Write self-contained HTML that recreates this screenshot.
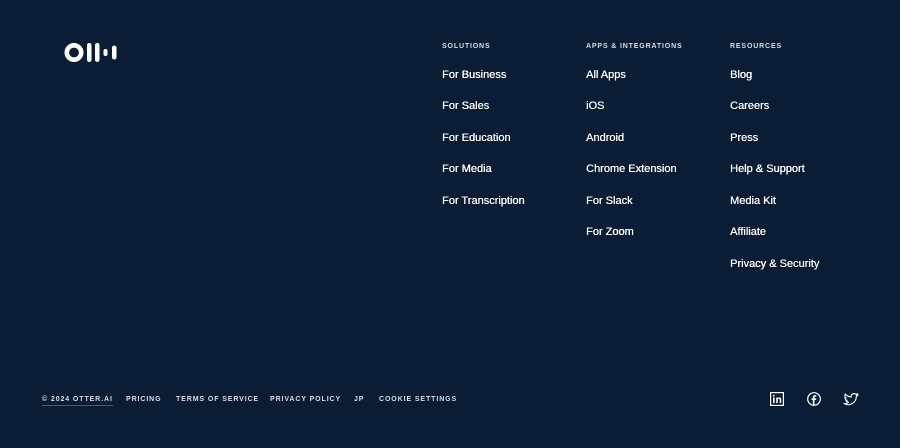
<!DOCTYPE html>
<html><head><meta charset="utf-8"><style>
*{margin:0;padding:0;box-sizing:border-box}
body{width:900px;height:448px;background:#0b1d35;font-family:"Liberation Sans",sans-serif;color:#fff;position:relative;overflow:hidden}
.col{position:absolute;top:42px}
.h{font-size:7px;letter-spacing:0.85px;font-weight:bold;color:#d8dde6;height:9px;line-height:9px}
.l{font-size:11px;font-weight:normal;position:absolute;white-space:nowrap;line-height:13px;text-shadow:0.3px 0 0 #fff}
.b{position:absolute;top:395px;font-size:7px;letter-spacing:0.9px;font-weight:bold;color:#d8dde6;line-height:9px;white-space:nowrap}
</style></head><body>
<svg style="position:absolute;left:64px;top:42px" width="54" height="22" viewBox="0 0 54 22">
<circle cx="10" cy="10.5" r="7.2" fill="none" stroke="#fff" stroke-width="4.6"/>
<rect x="23" y="1" width="4.5" height="19" rx="2.25" fill="#fff"/>
<rect x="31" y="1" width="4.5" height="19" rx="2.25" fill="#fff"/>
<rect x="39.5" y="7" width="4" height="7" rx="2" fill="#fff"/>
<rect x="48" y="3.5" width="4.5" height="14" rx="2.25" fill="#fff"/>
</svg>
<div class="col" style="left:442px"><div class="h">SOLUTIONS</div></div>
<div class="col" style="left:586px"><div class="h">APPS &amp; INTEGRATIONS</div></div>
<div class="col" style="left:730px"><div class="h">RESOURCES</div></div>
<div class="l" style="left:442px;top:69px">For Business</div>
<div class="l" style="left:442px;top:100px">For Sales</div>
<div class="l" style="left:442px;top:132px">For Education</div>
<div class="l" style="left:442px;top:163px">For Media</div>
<div class="l" style="left:442px;top:195px">For Transcription</div>
<div class="l" style="left:586px;top:69px">All Apps</div>
<div class="l" style="left:586px;top:100px">iOS</div>
<div class="l" style="left:586px;top:132px">Android</div>
<div class="l" style="left:586px;top:163px">Chrome Extension</div>
<div class="l" style="left:586px;top:195px">For Slack</div>
<div class="l" style="left:586px;top:226px">For Zoom</div>
<div class="l" style="left:730px;top:69px">Blog</div>
<div class="l" style="left:730px;top:100px">Careers</div>
<div class="l" style="left:730px;top:132px">Press</div>
<div class="l" style="left:730px;top:163px">Help &amp; Support</div>
<div class="l" style="left:730px;top:195px">Media Kit</div>
<div class="l" style="left:730px;top:226px">Affiliate</div>
<div class="l" style="left:730px;top:258px">Privacy &amp; Security</div>
<div class="b" style="left:42px;border-bottom:1px solid #4a5a72;padding-bottom:1px">© 2024 OTTER.AI</div>
<div class="b" style="left:126px">PRICING</div>
<div class="b" style="left:176px">TERMS OF SERVICE</div>
<div class="b" style="left:270px">PRIVACY POLICY</div>
<div class="b" style="left:354px">JP</div>
<div class="b" style="left:379px">COOKIE SETTINGS</div>
<svg style="position:absolute;left:770px;top:392px" width="14" height="14" viewBox="0 0 14 14"><rect x="0.6" y="0.6" width="12.8" height="12.8" fill="none" stroke="#fff" stroke-width="1.2"/><rect x="3" y="5.5" width="1.6" height="5.5" fill="#fff"/><circle cx="3.8" cy="3.7" r="0.9" fill="#fff"/><path d="M6.2 11V5.5h1.5v.8c.4-.6 1-.9 1.700-.9 1.2 0 1.8.8 1.8 2.2V11H9.7V7.9c0-.8-.3-1.1-.9-1.1s-1 .4-1 1.2V11z" fill="#fff"/></svg>
<svg style="position:absolute;left:807px;top:392px" width="14" height="14" viewBox="0 0 14 14"><circle cx="7" cy="7" r="6.3" fill="none" stroke="#fff" stroke-width="1.2"/><path d="M7.5 13V8h1.6l.2-1.6H7.5v-1c0-.5.2-.8.8-.8h1V3.2c-.3 0-.8-.1-1.4-.1-1.3 0-2.1.8-2.1 2.2v1.1H4.5V8h1.3v5z" fill="#fff"/></svg>
<svg style="position:absolute;left:843px;top:393px" width="16" height="13" viewBox="0 0 16 13"><path d="M15 1.8c-.5.2-1 .4-1.6.4.6-.3 1-.9 1.2-1.5-.5.3-1.1.6-1.7.7A2.8 2.8 0 0 0 8.2 3.9 8 8 0 0 1 2.3 1c-.8 1.3-.3 3 .9 3.8-.5 0-.9-.1-1.300-.3 0 1.4 1 2.6 2.3 2.800-.4.1-.9.1-1.300 0 .4 1.100 1.400 1.900 2.600 2A5.6 5.6 0 0 1 1 10.4 8 8 0 0 0 13.3 3.6c.6-.5 1.2-1.1 1.7-1.8z" fill="none" stroke="#fff" stroke-width="1.1" stroke-linejoin="round"/></svg>
</body></html>
